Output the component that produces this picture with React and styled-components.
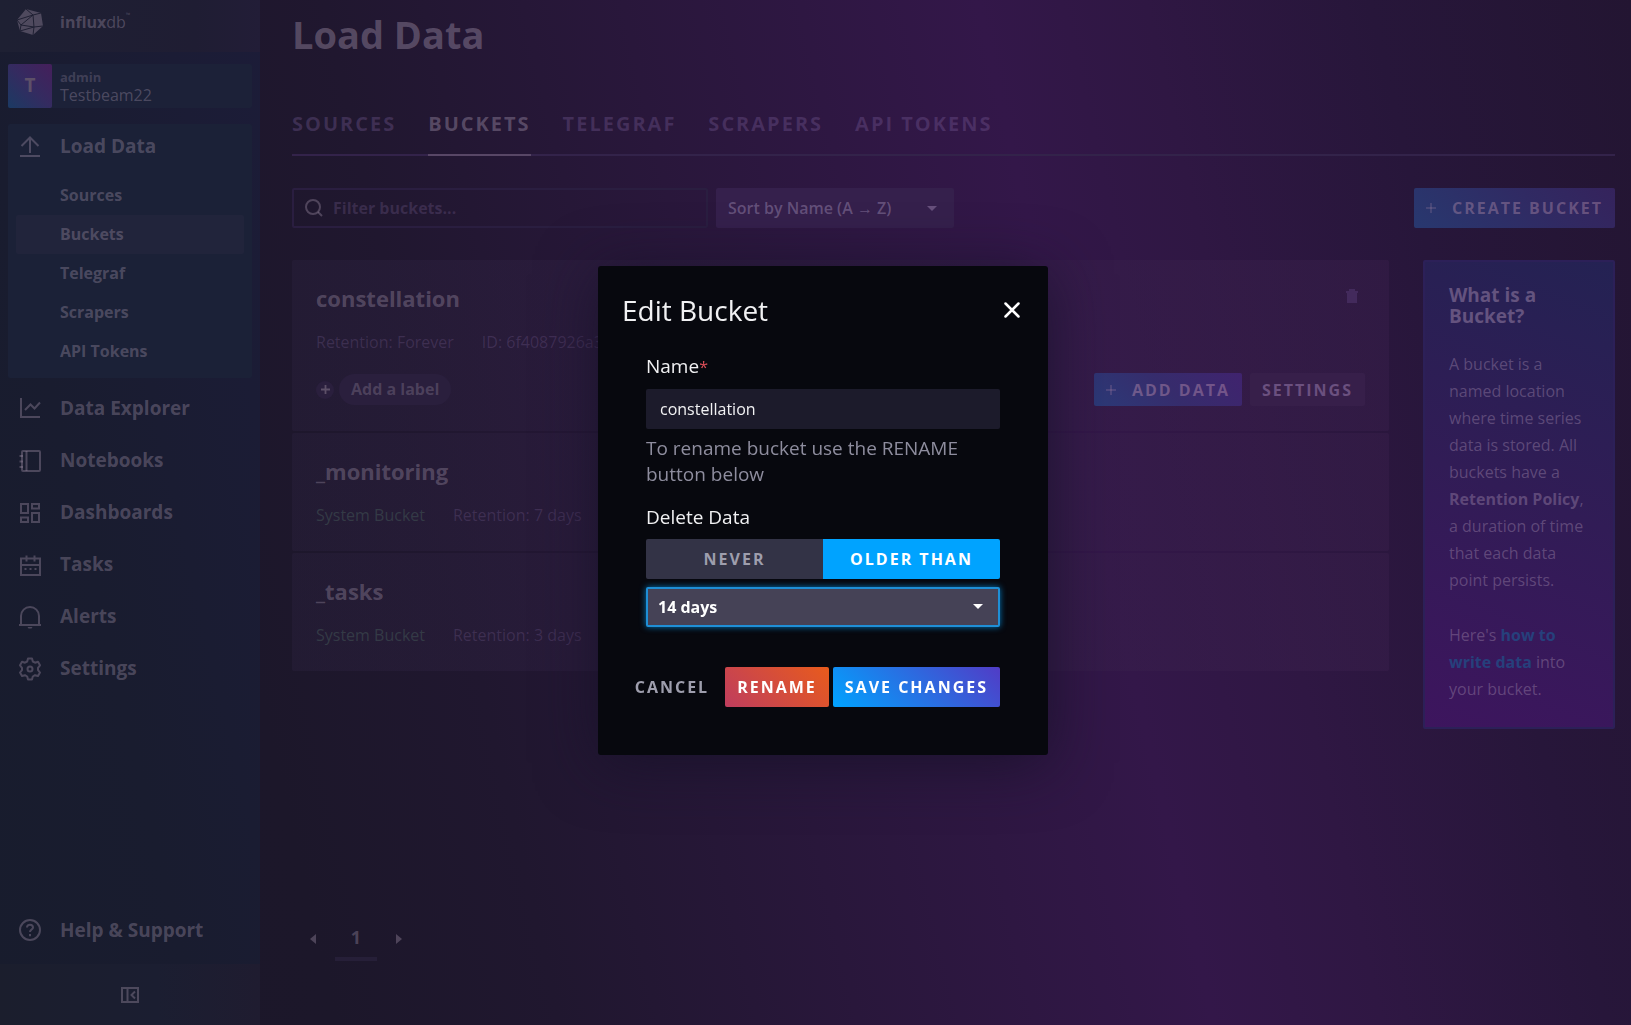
import React, { useState } from "react";
import styled, { createGlobalStyle, css } from "styled-components";

const Global = createGlobalStyle`
  * { box-sizing: border-box; }
  body {
    margin: 0;
    background: #1c172a;
    font-family: "Open Sans", sans-serif;
    -webkit-font-smoothing: antialiased;
  }
  button, input, select { font-family: inherit; }
  h1, h2, h3, h4, p, ul { margin: 0; padding: 0; }
`;

const text = "rgba(152, 138, 160, 0.4)";
const faint = "rgba(150, 120, 180, 0.22)";
const strong = "rgba(160, 145, 170, 0.42)";

const Page = styled.div`
  display: grid;
  grid-template-columns: 260px minmax(0, 1fr);
  min-height: 100vh;
  background: linear-gradient(77deg, #1b1729 0%, #1c172a 18%, #20172f 30%, #29173b 46%, #331749 65%, #2f1743 74%, #27163a 86%, #231532 100%);
`;

const Sidebar = styled.aside`
  display: flex;
  flex-direction: column;
  background: linear-gradient(77deg, #181c2d, #191c2f 40%, #1c1c38);
`;

const Brand = styled.a`
  display: flex;
  align-items: center;
  gap: 16px;
  height: 52px;
  padding: 0 16px 8px;
  background: linear-gradient(90deg, #1e2033, #1f1d33 75%, #221d37);
  color: ${text};
  font-size: 16px;
  text-decoration: none;
`;

const Mark = styled.svg`
  width: 28px;
  height: 28px;
`;

const Trademark = styled.small`
  font-size: 6px;
  vertical-align: top;
`;

const Account = styled.a`
  display: flex;
  align-items: center;
  height: 44px;
  margin: 12px 8px 16px;
  background: #1c2138;
  border-radius: 2px;
  color: ${faint};
  text-decoration: none;
`;

const Avatar = styled.span`
  display: grid;
  place-items: center;
  width: 44px;
  height: 44px;
  margin-right: 8px;
  padding-bottom: 2px;
  border-radius: 2px;
  background: linear-gradient(45deg, #1b3a63, #342b60 50%, #451f5b);
  color: #5d5068;
  font-size: 19px;
  font-weight: 700;
`;

const AccountText = styled.span`
  display: flex;
  flex-direction: column;
  color: ${text};
  font-size: 16px;
  line-height: 19px;
`;

const AccountUser = styled.span`
  color: rgba(152, 138, 160, 0.3);
  font-size: 13px;
  font-weight: 700;
  line-height: 18px;
`;

const Nav = styled.nav`
  display: flex;
  flex: 1;
  flex-direction: column;
  gap: 8px;
  padding: 0 8px 12px;
`;

const NavGroup = styled.div`
  padding-bottom: 7px;
  border-radius: 2px;
  background: #1b2137;
`;

const NavItem = styled.a`
  display: flex;
  align-items: center;
  gap: 16px;
  height: 44px;
  padding: 0 8px;
  margin-top: ${(p) => (p.$last ? "auto" : "0")};
  color: ${text};
  font-size: 19px;
  font-weight: 700;
  text-decoration: none;
`;

const NavIcon = styled.svg`
  width: 28px;
  height: 28px;
  padding: 3px;
  fill: none;
  stroke: currentColor;
  stroke-width: 2;
  overflow: visible;
`;

const SubList = styled.ul`
  padding: 8px 8px 0;
  list-style: none;
`;

const SubItem = styled.a`
  display: flex;
  align-items: center;
  height: 39px;
  padding: 0 0 2px 44px;
  border-radius: 2px;
  background: ${(p) => (p.$active ? "#21243b" : "transparent")};
  color: ${text};
  font-size: 16px;
  font-weight: 700;
  text-decoration: none;
`;

const Collapse = styled.button`
  display: grid;
  place-items: center;
  height: 61px;
  border: 0;
  background: linear-gradient(90deg, #1b1e2d, #1b1e31 60%, #1f1c30);
  color: ${text};
`;

const Main = styled.main`
  display: flex;
  flex-direction: column;
  padding: 6px 16px 64px 32px;
`;

const Title = styled.h1`
  color: ${strong};
  font-size: 38px;
  font-weight: 700;
  line-height: 56px;
`;

const Tabs = styled.nav`
  display: flex;
  gap: 32px;
  height: 64px;
  margin: 30px 0 32px;
  border-bottom: 2px solid #33234a;
`;

const Tab = styled.a`
  height: 64px;
  border-bottom: 2px solid ${(p) => (p.$active ? "#584766" : "transparent")};
  color: ${(p) => (p.$active ? strong : "rgba(140, 110, 175, 0.28)")};
  font-size: 20px;
  font-weight: 700;
  letter-spacing: 2px;
  line-height: 64px;
  text-decoration: none;
  text-transform: uppercase;
`;

const Toolbar = styled.div`
  display: flex;
  gap: 8px;
  margin-bottom: 32px;
`;

const Search = styled.label`
  display: flex;
  align-items: center;
  gap: 8px;
  width: 416px;
  height: 40px;
  padding: 0 11px;
  border: 2px solid #2a1e40;
  border-radius: 2px;
  color: ${text};
`;

const SearchInput = styled.input`
  flex: 1;
  min-width: 0;
  border: 0;
  outline: 0;
  background: none;
  color: ${text};
  font-size: 16px;
  font-weight: 700;
  &::placeholder { color: ${faint}; opacity: 1; }
`;

const SelectWrap = styled.div`
  display: grid;
  align-items: center;
  width: ${(p) => p.$width};
  height: 40px;
  > * { grid-area: 1 / 1; }
  > svg { justify-self: end; margin-right: 17px; pointer-events: none; }
`;

const Select = styled.select`
  appearance: none;
  width: 100%;
  height: 40px;
  padding: 0 40px 0 10px;
  border: 2px solid transparent;
  border-radius: 2px;
  outline: 0;
  background: #35204c;
  color: rgba(160, 140, 180, 0.45);
  font-size: 16px;
  font-weight: 600;
  ${(p) =>
    p.$focused &&
    css`
      border-color: #1f8fd6;
      background: #454256;
      box-shadow: 0 0 6px rgba(0, 163, 255, 0.7);
      color: #fff;
      font-weight: 700;
    `}
`;

const buttonTone = {
  primaryDim: css`background: linear-gradient(45deg, #28386f, #302a63 60%, #35235c); color: rgba(170, 135, 165, 0.45);`,
  primaryDimmer: css`background: linear-gradient(45deg, #2c3a78, #362c6c 50%, #40236e); color: rgba(170, 130, 165, 0.5);`,
  ghostDim: css`background: #371f4a; color: rgba(160, 130, 180, 0.5);`,
  plain: css`background: none; color: #9e9ead;`,
  danger: css`background: linear-gradient(45deg, #bf3d5e, #e85b1c); color: #fff;`,
  primary: css`background: linear-gradient(45deg, #00a3ff, #513cc6); color: #fff;`,
};

const Button = styled.button`
  display: inline-flex;
  align-items: center;
  justify-content: center;
  gap: 16px;
  height: ${(p) => (p.$small ? "33px" : "40px")};
  padding: 0 12px;
  border: 0;
  border-radius: 2px;
  font-size: 16px;
  font-weight: 700;
  letter-spacing: 2px;
  text-transform: uppercase;
  white-space: nowrap;
  ${(p) => buttonTone[p.$tone]}
`;

const Push = styled.div`
  margin-left: auto;
`;

const Content = styled.div`
  display: grid;
  grid-template-columns: minmax(0, 1fr) 192px;
  align-items: start;
  gap: 34px;
`;

const Buckets = styled.div`
  display: flex;
  flex-direction: column;
  gap: 2px;
`;

const Card = styled.article`
  display: flex;
  flex-direction: column;
  padding: 24px;
  border-radius: 2px;
  background: linear-gradient(90deg, rgba(45, 35, 65, 0.35), rgba(62, 34, 80, 0.35));
`;

const CardHead = styled.div`
  display: flex;
  align-items: flex-start;
  justify-content: space-between;
  margin-bottom: 18px;
`;

const CardTitle = styled.h2`
  color: ${text};
  font-size: 22px;
  font-weight: 700;
  line-height: 28px;
`;

const Meta = styled.div`
  display: flex;
  gap: 28px;
  color: ${faint};
  font-size: 16px;
  line-height: 24px;
`;

const System = styled.span`
  color: #343a46;
`;

const CardFoot = styled.div`
  display: flex;
  align-items: center;
  gap: 8px;
  height: 33px;
  margin: 19px 0 1px;
`;

const Plus = styled.button`
  display: grid;
  place-items: center;
  width: 18px;
  height: 18px;
  padding: 0;
  border: 0;
  border-radius: 50%;
  background: #2a1f3d;
  color: #5d5068;
`;

const Pill = styled.button`
  height: 31px;
  margin-left: -3px;
  padding: 0 12px 2px;
  border: 0;
  border-radius: 16px;
  background: #2a1f3d;
  color: rgba(152, 138, 160, 0.32);
  font-size: 16px;
  font-weight: 700;
`;

const IconButton = styled.button`
  display: grid;
  place-items: center;
  padding: 0;
  border: 0;
  background: none;
  color: ${(p) => p.$color};
`;

const Info = styled.aside`
  padding: 23px 24px 24px;
  border: 2px solid #2c2058;
  border-radius: 2px;
  background: linear-gradient(22deg, #3d155e, #311c56 50%, #242253);
  color: rgba(152, 128, 165, 0.45);
  font-size: 16px;
  line-height: 27px;
  p + p { margin-top: 28px; }
`;

const InfoTitle = styled.h3`
  margin-bottom: 24px;
  color: rgba(160, 135, 170, 0.5);
  font-size: 19px;
  font-weight: 700;
  line-height: 21px;
`;

const InfoLink = styled.a`
  color: #26407c;
  font-weight: 700;
  text-decoration: none;
`;

const Pagination = styled.nav`
  display: flex;
  align-items: center;
  gap: 19px;
  margin: auto 0 0 18px;
`;

const PageNumber = styled.button`
  width: 42px;
  height: 44px;
  border: 0;
  border-bottom: 4px solid #261f38;
  background: none;
  color: ${text};
  font-size: 18px;
  font-weight: 700;
`;

const Overlay = styled.div`
  position: fixed;
  inset: 0;
  display: flex;
  align-items: center;
  justify-content: center;
  padding: 0 0 5px 15px;
`;

const Dialog = styled.form`
  width: 450px;
  padding: 24px 24px 48px;
  border-radius: 3px;
  background: #07080e;
  box-shadow: 0 8px 60px rgba(22, 18, 40, 0.8);
`;

const DialogHead = styled.header`
  display: flex;
  align-items: center;
  justify-content: space-between;
  height: 40px;
  margin-bottom: 20px;
  padding-right: 4px;
`;

const DialogTitle = styled.h2`
  color: #f1f1f3;
  font-size: 28px;
  font-weight: 400;
  line-height: 36px;
`;

const DialogBody = styled.div`
  display: flex;
  flex-direction: column;
  padding: 0 24px;
`;

const Field = styled.label`
  color: #f1f1f3;
  font-size: 19px;
  line-height: 32px;
`;

const Required = styled.span`
  color: #dc4e58;
  font-size: 16px;
`;

const NameInput = styled.input`
  height: 40px;
  margin-top: 6px;
  padding: 0 14px;
  border: 0;
  border-radius: 2px;
  outline: 0;
  background: #1c1b2b;
  color: #f1f1f3;
  font-size: 16px;
`;

const Hint = styled.p`
  margin: 6px 0 14px;
  color: #8e8d9e;
  font-size: 19px;
  line-height: 26px;
`;

const Toggle = styled.fieldset`
  display: grid;
  grid-template-columns: 1fr 1fr;
  margin: 0 0 8px;
  padding: 0;
  border: 0;
  border-radius: 2px;
  overflow: hidden;
`;

const ToggleLegend = styled.legend`
  height: 38px;
  padding: 0;
  color: #f1f1f3;
  font-size: 19px;
  line-height: 32px;
`;

const ToggleOption = styled.label`
  display: grid;
  place-items: center;
  height: 40px;
  background: ${(p) => (p.$on ? "#00a3ff" : "#333346")};
  color: ${(p) => (p.$on ? "#fff" : "#9e9ead")};
  font-size: 16px;
  font-weight: 700;
  letter-spacing: 2px;
  text-transform: uppercase;
  > * { grid-area: 1 / 1; }
`;

const ToggleRadio = styled.input`
  appearance: none;
  width: 100%;
  height: 100%;
  margin: 0;
`;

const Actions = styled.footer`
  display: flex;
  justify-content: flex-end;
  gap: 4px;
  margin: 40px 0 0 -24px;
`;

const Caret = ({ color, d = "M0 0h10l-5 5z", w = 10, h = 5 }) => (
  <svg width={w} height={h} viewBox={`0 0 ${w} ${h}`}><path d={d} fill={color} /></svg>
);

const PlusIcon = ({ size = 10, weight = 1 }) => (
  <svg width={size} height={size} viewBox="0 0 10 10" stroke="currentColor" strokeWidth={weight}>
    <path d="M5 0v10M0 5h10" />
  </svg>
);

const icons = {
  load: <path d="M1 21h20M11 18V3M2.500 11L11 2.500 19.500 11" />,
  explorer: <path d="M2 1v19h19M6 13l5.500-5.500 4 4L21 5.500" />,
  notebook: <><rect x="3" y="2" width="18" height="20" rx="1" /><path d="M7.500 2v20M.5 7H4M.5 12.500H4M.5 18H4" /></>,
  dashboards: <path d="M2 3h7v9H2zM13 3h7v4.500h-7zM2 16.500h7V21H2zM13 12h7v9h-7z" />,
  tasks: <><path d="M2 5.500h19V22H2zM2 12h19M7.500 2.500v6M15.500 2.500v6" /><path d="M5.500 16h2M10.500 16h2M15.500 16h2" /></>,
  alerts: <><path d="M0 20h22M2 20V11a9 9 0 0 1 18 0v9" /><path d="M8.500 22h5l-1 1.500h-3z" fill="currentColor" stroke="none" /></>,
  settings: (
    <>
      <path d="M9 1.500h4l.8 3 2.200 1.200 3-.9 2 3.500L19 10.800v2.300l2 2.500-2 3.400-3-.8-2.200 1.300-.8 3H9l-.8-3L6 18.200l-3 .8-2-3.400 2-2.500v-2.300L1 8.300l2-3.500 3 .9 2.200-1.200z" strokeLinejoin="round" />
      <circle cx="11" cy="12" r="2.500" />
    </>
  ),
  help: <><circle cx="11" cy="11" r="10" /><path d="M8 8.500C8 4.700 14 4.900 14 8.500c0 2-3 2.200-3 4.500M11 15v2.300" /></>,
};

const Icon = ({ name }) => <NavIcon viewBox="0 0 22 22">{icons[name]}</NavIcon>;

const subItems = ["Sources", "Buckets", "Telegraf", "Scrapers", "API Tokens"];
const navItems = [
  ["explorer", "Data Explorer"],
  ["notebook", "Notebooks"],
  ["dashboards", "Dashboards"],
  ["tasks", "Tasks"],
  ["alerts", "Alerts"],
  ["settings", "Settings"],
];

function SystemCard({ name, retention }) {
  return (
    <Card>
      <CardHead><CardTitle>{name}</CardTitle></CardHead>
      <Meta><System>System Bucket</System><span>Retention: {retention}</span></Meta>
    </Card>
  );
}

function SideNav() {
  return (
    <Sidebar>
      <Brand href="#home">
        <Mark viewBox="0 0 28 28">
          <path fill="currentColor" d="M10 1l15 4 2 13-10 9-13-4L1 12z" />
          <path stroke="#1f2033" fill="none" d="M5 17L17 7l1 12zM1 12l4 5-1 6M1 12L17 7M10 1l7 6 8-2M18 19l9-1M4 23l14-4-1 8" />
        </Mark>
        <span><b>influx</b>db<Trademark>™</Trademark></span>
      </Brand>
      <Account href="#account">
        <Avatar>T</Avatar>
        <AccountText><AccountUser>admin</AccountUser>Testbeam22</AccountText>
      </Account>
      <Nav>
        <NavGroup>
          <NavItem href="#load"><Icon name="load" />Load Data</NavItem>
          <SubList>
            {subItems.map((s) => (
              <li key={s}><SubItem href="#sub" $active={s === "Buckets"}>{s}</SubItem></li>
            ))}
          </SubList>
        </NavGroup>
        {navItems.map(([icon, label]) => (
          <NavItem key={label} href="#nav"><Icon name={icon} />{label}</NavItem>
        ))}
        <NavItem href="#help" $last><Icon name="help" />Help &amp; Support</NavItem>
      </Nav>
      <Collapse aria-label="Collapse navigation">
        <svg width="18" height="16" viewBox="0 0 18 16" fill="none" stroke="currentColor" strokeWidth="2">
          <path d="M1 1h16v14H1zM6.500 1v14M14 4.500L10.500 8l3.500 3.500" />
        </svg>
      </Collapse>
    </Sidebar>
  );
}

function EditBucket() {
  const [name, setName] = useState("constellation");
  const [mode, setMode] = useState("older");
  return (
    <Overlay>
      <Dialog role="dialog" aria-label="Edit Bucket" onSubmit={(e) => e.preventDefault()}>
        <DialogHead>
          <DialogTitle>Edit Bucket</DialogTitle>
          <IconButton type="button" aria-label="Close" $color="#fff">
            <svg width="16" height="16" viewBox="0 0 16 16" stroke="currentColor" strokeWidth="2.500" strokeLinecap="round">
              <path d="M1.500 1.500l13 13M14.500 1.500l-13 13" />
            </svg>
          </IconButton>
        </DialogHead>
        <DialogBody>
          <Field htmlFor="name">Name<Required>*</Required></Field>
          <NameInput id="name" value={name} onChange={(e) => setName(e.target.value)} />
          <Hint>To rename bucket use the RENAME button below</Hint>
          <Toggle>
            <ToggleLegend>Delete Data</ToggleLegend>
            {[["never", "Never"], ["older", "Older than"]].map(([id, label]) => (
              <ToggleOption key={id} $on={mode === id}>
                <ToggleRadio type="radio" name="retention" checked={mode === id} onChange={() => setMode(id)} />
                <span>{label}</span>
              </ToggleOption>
            ))}
          </Toggle>
          <SelectWrap $width="100%">
            <Select aria-label="Retention period" $focused><option>14 days</option></Select>
            <Caret color="#fff" />
          </SelectWrap>
          <Actions>
            <Button type="button" $tone="plain">Cancel</Button>
            <Button type="button" $tone="danger">Rename</Button>
            <Button type="submit" $tone="primary">Save Changes</Button>
          </Actions>
        </DialogBody>
      </Dialog>
    </Overlay>
  );
}

export default function App() {
  return (
    <>
      <Global />
      <Page>
        <SideNav />
        <Main>
          <Title>Load Data</Title>
          <Tabs>
            {subItems.map((t) => (
              <Tab key={t} href="#tab" $active={t === "Buckets"}>{t}</Tab>
            ))}
          </Tabs>
          <Toolbar>
            <Search>
              <svg width="18" height="18" viewBox="0 0 18 18" fill="none" stroke="currentColor" strokeWidth="2">
                <circle cx="8" cy="8" r="7" /><path d="M13 13l4 4" />
              </svg>
              <SearchInput aria-label="Filter buckets" placeholder="Filter buckets..." />
            </Search>
            <SelectWrap $width="238px">
              <Select aria-label="Sort buckets"><option>Sort by Name (A → Z)</option></Select>
              <Caret color="#67507c" />
            </SelectWrap>
            <Push><Button $tone="primaryDim"><PlusIcon />Create Bucket</Button></Push>
          </Toolbar>
          <Content>
            <Buckets>
              <Card>
                <CardHead>
                  <CardTitle>constellation</CardTitle>
                  <IconButton aria-label="Delete bucket" $color="#432a5c">
                    <svg width="26" height="24" viewBox="0 0 26 24" fill="currentColor">
                      <path d="M7 7h3V5h6v2h3v2h-1v10H8V9H7z" />
                    </svg>
                  </IconButton>
                </CardHead>
                <Meta><span>Retention: Forever</span><span>ID: 6f4087926a31c0de</span></Meta>
                <CardFoot>
                  <Plus aria-label="Add"><PlusIcon size={9} weight={2} /></Plus>
                  <Pill>Add a label</Pill>
                  <Push />
                  <Button $small $tone="primaryDimmer"><PlusIcon />Add Data</Button>
                  <Button $small $tone="ghostDim">Settings</Button>
                </CardFoot>
              </Card>
              <SystemCard name="_monitoring" retention="7 days" />
              <SystemCard name="_tasks" retention="3 days" />
            </Buckets>
            <Info>
              <InfoTitle>What is a Bucket?</InfoTitle>
              <p>A bucket is a named location where time series data is stored. All buckets have a <b>Retention Policy</b>, a duration of time that each data point persists.</p>
              <p>Here's <InfoLink href="#write">how to write data</InfoLink> into your bucket.</p>
            </Info>
          </Content>
          <Pagination aria-label="Pages">
            <IconButton aria-label="Previous page" $color={text}><Caret color="currentColor" d="M6 0v10L0 5z" w={6} h={10} /></IconButton>
            <PageNumber>1</PageNumber>
            <IconButton aria-label="Next page" $color={text}><Caret color="currentColor" d="M0 0v10l6-5z" w={6} h={10} /></IconButton>
          </Pagination>
        </Main>
      </Page>
      <EditBucket />
    </>
  );
}
